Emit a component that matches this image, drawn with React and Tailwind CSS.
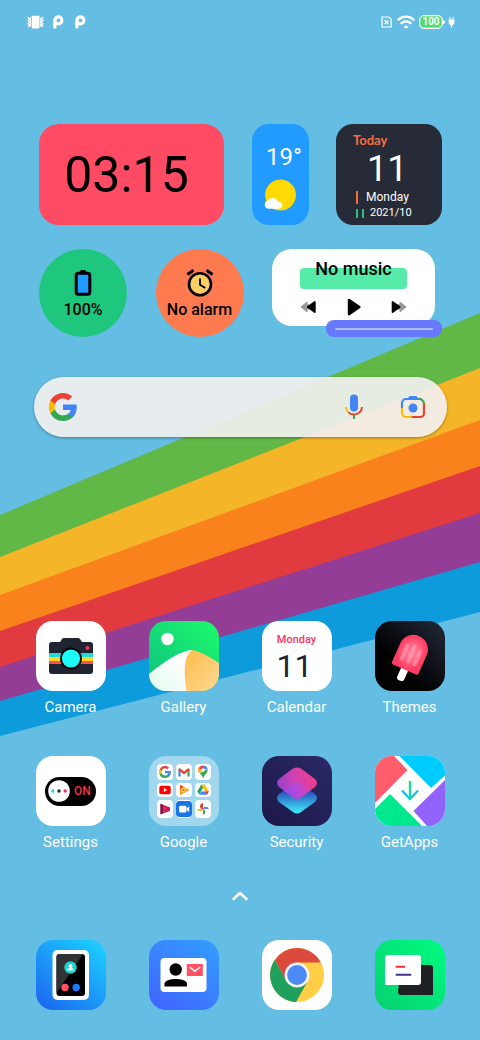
import React from "react";

function Wallpaper() {
  return (
    <svg className="absolute inset-0 h-full w-full" viewBox="0 0 480 1040" preserveAspectRatio="none" aria-hidden="true">
      <rect width="480" height="1040" fill="#64bde2" />
      <path d="M0 515 480 313V380L0 570Z" fill="#62b846" />
      <path d="M0 557 480 368V430L0 605Z" fill="#f4b528" />
      <path d="M0 595 480 420V476L0 640Z" fill="#f9821c" />
      <path d="M0 631 480 466V524L0 677Z" fill="#e13b3f" />
      <path d="M0 667 480 513V572L0 711Z" fill="#933d97" />
      <path d="M0 701 480 562V612L0 736Z" fill="#0d9bdc" />
    </svg>
  );
}

function BubbleMark() {
  return (
    <svg className="h-[14px] w-3" viewBox="0 0 12 14" aria-hidden="true">
      <circle cx="6.4" cy="5.4" r="3.5" fill="none" stroke="#fff" strokeWidth="3.2" />
      <rect x="1.2" y="5" width="3.3" height="8.6" rx="1" fill="#fff" />
    </svg>
  );
}

function StatusBar() {
  return (
    <header className="flex h-11 items-center justify-between pl-[27px] pr-[25px]">
      <div className="flex items-center">
        <svg className="mr-2 h-[14px] w-[17px]" viewBox="0 0 17 14" aria-hidden="true">
          <rect x="4.7" y="0.8" width="7.8" height="12.8" rx="1" fill="#fff" />
          <path d="M.6 2l2 1.6-1.6 1.7 1.6 1.7L1 8.700l1.600 1.700-1.600 1.600M3.400 2.500v9M16.400 2l-2 1.600L16 5.300 14.400 7 16 8.700l-1.600 1.700L16 12M13.800 2.500v9" fill="none" stroke="#fff" strokeWidth="1.200" />
        </svg>
        <BubbleMark />
        <span className="w-[10px]" />
        <BubbleMark />
      </div>
      <div className="flex items-center">
        <svg className="mr-[5px] h-3 w-[11px]" viewBox="0 0 11 12" aria-hidden="true">
          <path d="M1 1h6.800L10.200 3.200V11H1Z" fill="none" stroke="#fff" strokeWidth="1.200" />
          <path d="m3.600 4.300 3.800 3.800M7.400 4.300 3.600 8.100" stroke="#fff" strokeWidth="1.300" />
        </svg>
        <svg className="mr-1 h-[14px] w-[18px]" viewBox="0 0 18 14" fill="none" stroke="#fff" strokeWidth="2.400" strokeLinecap="round" aria-hidden="true">
          <path d="M1.500 4.600C5.800.6 12.200.6 16.500 4.600M4.500 8.200c2.600-2.300 6.400-2.300 9 0" />
          <ellipse cx="9" cy="11.900" rx="1.700" ry="1" fill="#fff" strokeWidth="1" />
        </svg>
        <div className="flex items-center">
          <span className="flex h-[14px] w-6 items-center justify-center rounded-[5px] border border-white bg-[#4fdc72] font-['Roboto',sans-serif] text-[10px] leading-none font-bold text-white ring-1 ring-white/30 ring-inset">100</span>
          <span className="h-1 w-[2px] rounded-r bg-white" />
        </div>
        <svg className="ml-[3px] h-[13px] w-[7px]" viewBox="0 0 7 13" aria-hidden="true">
          <path d="M1.400.8h1v2.600h2.200V.8h1v2.600H6.400V6.200C6.400 8 5.200 9 4.100 9.200V12H2.900V9.200C1.800 9 .6 8 .6 6.200V3.400h.8Z" fill="#fff" />
        </svg>
      </div>
    </header>
  );
}

function WeatherCard() {
  return (
    <section className="flex h-[101px] w-[57px] flex-col items-center rounded-[17px] bg-[#219bff] pt-[19px]" aria-label="Weather">
      <p className="pl-2 text-2xl leading-7 text-white">19°</p>
      <svg className="mt-2 h-8 w-8" viewBox="0 0 32 32" aria-hidden="true">
        <circle cx="16.500" cy="16" r="15.400" fill="#ffd900" />
        <path d="M4.500 29.700a4.200 4.200 0 0 1-.4-8.300 5.400 5.400 0 0 1 9.800 1.500 3.500 3.500 0 1 1 .1 6.800Z" fill="#fff" />
      </svg>
    </section>
  );
}

function DateCard() {
  return (
    <section className="h-[101px] w-[106px] rounded-[17px] bg-[#262b37] px-[17px] pt-2 text-white" aria-label="Date">
      <p className="font-['Lato',sans-serif] text-[13px] leading-4 font-bold text-[#fb6b42]">Today</p>
      <p className="pl-[14px] text-4xl leading-[42px]">11</p>
      <p className="flex h-[14px] items-center pl-[3px] text-xs">
        <span className="mr-2 h-[13px] w-[2px] bg-[#fb6b42]" />
        Monday
      </p>
      <p className="mt-[2px] flex h-[15px] items-center pl-[3px] text-[11px]">
        <span className="mr-1 h-[9px] w-[2px] bg-[#20c77d]" />
        <span className="mr-[6px] h-[9px] w-[2px] bg-[#20c77d]" />
        2021/10
      </p>
    </section>
  );
}

function MusicCard() {
  return (
    <section className="relative h-22 w-[170px]" aria-label="Music">
      <div className="mr-[7px] h-[77px] rounded-[20px] bg-white pt-2">
        <div className="relative text-center">
          <span className="absolute inset-x-7 top-[11px] h-[21px] rounded-[4px] bg-[#56eba9]" />
          <p className="relative text-lg leading-6 font-medium">No music</p>
        </div>
        <div className="mt-[17px] flex items-center justify-between px-7">
          <button type="button" aria-label="Previous track">
            <svg className="h-[18px] w-4" viewBox="0 0 16 18">
              <path d="M1 9 7 4v2.800h2v4.400H7V14Z" fill="#999" stroke="#999" strokeWidth="1" strokeLinejoin="round" />
              <path d="M14.800 4v10L7.800 9Z" fill="#000" stroke="#000" strokeWidth="1.800" strokeLinejoin="round" />
            </svg>
          </button>
          <button type="button" aria-label="Play">
            <svg className="h-[18px] w-4" viewBox="0 0 16 18">
              <path d="M3 2v14.200L13.400 9Z" fill="#000" stroke="#000" strokeWidth="2.400" strokeLinejoin="round" />
            </svg>
          </button>
          <button type="button" aria-label="Next track">
            <svg className="h-[18px] w-4" viewBox="0 0 16 18">
              <path d="M15 9 9 4v2.800H7v4.400h2V14Z" fill="#999" stroke="#999" strokeWidth="1" strokeLinejoin="round" />
              <path d="M1.600 4v10l7-5Z" fill="#000" stroke="#000" strokeWidth="1.800" strokeLinejoin="round" />
            </svg>
          </button>
        </div>
      </div>
      <div className="absolute right-0 bottom-0 flex h-[17px] w-[116px] items-center rounded-lg bg-[#6779fc] px-[9px]">
        <span className="h-[2px] w-full rounded bg-[#b1bcff]" />
      </div>
    </section>
  );
}

function Widgets() {
  return (
    <div className="mt-20 mr-[38px] ml-[39px] flex flex-col gap-6">
      <div className="flex justify-between">
        <section className="flex h-[101px] w-[185px] items-center justify-center rounded-[20px] bg-[#ff4c64] pr-[10px]" aria-label="Clock">
          <time className="text-[50px] leading-none">03:15</time>
        </section>
        <WeatherCard />
        <DateCard />
      </div>
      <div className="flex justify-between">
        <section className="flex size-22 flex-col items-center rounded-full bg-[#1fc77e] pt-5" aria-label="Battery">
          <svg className="h-7 w-[18px]" viewBox="0 0 18 28" aria-hidden="true">
            <rect x="6" y="1" width="6" height="4" rx="1.500" />
            <rect x="2.200" y="4.200" width="13.600" height="21" rx="2" fill="#219bff" stroke="#000" strokeWidth="3" />
          </svg>
          <p className="mt-[3px] text-base leading-5 font-medium">100%</p>
        </section>
        <section className="flex size-22 flex-col items-center rounded-full bg-[#ff7b4f] pt-5" aria-label="Alarm">
          <svg className="h-7 w-7" viewBox="0 0 28 28" fill="none" stroke="#000" strokeWidth="2.600" aria-hidden="true">
            <circle cx="14" cy="15.200" r="11" fill="#fdcd66" />
            <path d="M14 9.500v6.200l5.300 3.400" strokeWidth="1.800" />
            <path d="M1.400 5.400 7.500 1.200M20.500 1.200l6.100 4.200" strokeWidth="3" />
          </svg>
          <p className="mt-[3px] text-base leading-5 font-medium whitespace-nowrap">No alarm</p>
        </section>
        <MusicCard />
      </div>
    </div>
  );
}

function GoogleG({ className }) {
  return (
    <svg className={className} viewBox="0 0 24 24" aria-hidden="true">
      <path fill="#4285f4" d="M23.500 9.800H12v4.700h6.600a5.700 5.700 0 0 1-2.500 3.700v3.100h4c2.400-2.200 3.700-5.400 3.700-9.200 0-.8-.1-1.600-.3-2.300Z" />
      <path fill="#34a853" d="M12 24c3.300 0 6-1.100 8.100-2.900l-4-3.100c-1.100.8-2.500 1.200-4.100 1.200-3.200 0-5.800-2.100-6.800-5H1.200v3.200A12 12 0 0 0 12 24Z" />
      <path fill="#fbbc05" d="M5.200 14.200a7 7 0 0 1 0-4.500V6.500h-4a12 12 0 0 0 0 10.900Z" />
      <path fill="#ea4335" d="M12 4.700c1.800 0 3.400.6 4.600 1.800L20 3.100A12 12 0 0 0 1.200 6.500l4 3.200c1-2.900 3.600-5 6.800-5Z" />
    </svg>
  );
}

function SearchBar() {
  return (
    <form role="search" className="mt-10 mr-[33px] ml-[34px] flex h-[60px] items-center rounded-full bg-[#f2f0f0]/92 pr-5 pl-[15px] shadow-[0_1px_3px_rgba(0,0,0,0.35)]">
      <GoogleG className="h-7 w-7 shrink-0" />
      <input type="search" aria-label="Search" className="mx-3 min-w-0 flex-1 bg-transparent text-base outline-none" />
      <button type="button" aria-label="Voice search" className="mr-[35px]">
        <svg className="h-7 w-5" viewBox="0 0 20 28" fill="none" strokeWidth="2">
          <rect x="6" y="1.500" width="8" height="17" rx="4" fill="#4285f4" />
          <path d="M2 14A8 8 0 0 0 4.600 19.400" stroke="#fbbc05" />
          <path d="M4.600 19.400A8 8 0 0 0 18 14" stroke="#ea4335" />
          <path d="M10 21.800V26" stroke="#34a853" />
        </svg>
      </button>
      <button type="button" aria-label="Search with camera">
        <svg className="h-7 w-7" viewBox="0 0 28 28" fill="none" strokeWidth="2.200">
          <path d="M8.500 6 10.500 3h7l2 3Z" fill="#4285f4" />
          <path d="M3 15V10A4 4 0 0 1 7 6H20" stroke="#4285f4" />
          <path d="M19.500 6A5 5 0 0 1 25 11.500" stroke="#34a853" />
          <path d="M25 11V20.500A3.500 3.500 0 0 1 21.500 24H12.500" stroke="#ea4335" />
          <path d="M3 15v5A4 4 0 0 0 7 24H12.500" stroke="#fbbc05" />
          <circle cx="14" cy="15" r="4.500" fill="#4285f4" />
        </svg>
      </button>
    </form>
  );
}

function Art({ children }) {
  return (
    <svg className="h-full w-full" viewBox="0 0 70 70" aria-hidden="true">
      {children}
    </svg>
  );
}

const camera = (
  <Art>
    <rect width="70" height="70" fill="#fff" />
    <path d="M16 21h8l2-3q.7-1 2-1h14q1.300 0 2 1l2 3h8a3 3 0 0 1 3 3v26a3 3 0 0 1-3 3H16a3 3 0 0 1-3-3V24a3 3 0 0 1 3-3Z" fill="#1f2530" />
    <rect x="13" y="32" width="44" height="4" fill="#24d9d6" />
    <rect x="13" y="36" width="44" height="4" fill="#ffd51f" />
    <rect x="13" y="40" width="44" height="3" fill="#ff4c56" />
    <circle cx="35" cy="37.500" r="10" fill="#1cfbf8" stroke="#000" strokeWidth="1.800" />
    <circle cx="51.500" cy="27" r="2" fill="#ff3555" />
  </Art>
);

const gallery = (
  <Art>
    <defs>
      <linearGradient id="galSky" x1="1" y1="0" x2="0" y2="1"><stop stopColor="#1dfb6b" /><stop offset="1" stopColor="#0fbe80" /></linearGradient>
      <linearGradient id="galHill" x1="1" y1="0" x2="0" y2="1"><stop offset=".3" stopColor="#fff" /><stop offset="1" stopColor="#e3fbf0" /></linearGradient>
      <linearGradient id="galSand" x1="0" y1="0" x2="1" y2="1"><stop stopColor="#ffbd45" /><stop offset="1" stopColor="#fbd896" /></linearGradient>
    </defs>
    <rect width="70" height="70" fill="url(#galSky)" />
    <circle cx="18.500" cy="18" r="6.200" fill="#fff" />
    <path d="M0 53Q28 30 43 29Q48 29 50 70H0Z" fill="url(#galHill)" />
    <path d="M43 29Q52 30 70 42V70H37.500Q32 38 43 29Z" fill="url(#galSand)" />
  </Art>
);

const calendar = (
  <div className="flex h-full flex-col items-center bg-white pt-[11px]">
    <span className="text-[11px] leading-4 font-medium text-[#f9345a]">Monday</span>
    <span className="pr-1 text-[32px] leading-9 text-[#20242e]">11</span>
  </div>
);

const themes = (
  <Art>
    <defs>
      <linearGradient id="themeBg" x1="1" y1="0" x2="0" y2="1"><stop stopColor="#222b3a" /><stop offset=".65" stopColor="#020203" /></linearGradient>
      <radialGradient id="pop"><stop stopColor="#ff8aa2" /><stop offset="1" stopColor="#ff3c62" /></radialGradient>
    </defs>
    <rect width="70" height="70" fill="url(#themeBg)" />
    <g transform="translate(29.500 48.500) rotate(24)">
      <rect x="-3.800" y="-2" width="7.600" height="14" rx="3" fill="#fff" />
      <path d="M-14.500-22a14.500 14.500 0 0 1 29 0V-2a2 2 0 0 1-2 2h-25a2 2 0 0 1-2-2Z" fill="url(#pop)" />
      <path d="M-7-23V-9M0-25V-9M7-23V-9" stroke="#ff9db1" strokeWidth="4" strokeLinecap="round" opacity=".6" />
    </g>
  </Art>
);

const settings = (
  <div className="flex h-full items-center justify-center bg-white">
    <span className="flex h-[29px] w-[51px] items-center rounded-full bg-black pl-[3px]">
      <svg className="size-[22px]" viewBox="0 0 22 22" aria-hidden="true">
        <circle cx="11" cy="11" r="10.800" fill="#fff" />
        <circle cx="4.800" cy="11" r="1.700" fill="#21d7dc" />
        <circle cx="11" cy="11" r="1.700" fill="#20242e" />
        <circle cx="17.200" cy="11" r="1.700" fill="#f5287b" />
      </svg>
      <span className="ml-1 text-xs leading-none font-medium text-[#f0323c]">ON</span>
    </span>
  </div>
);

const miniApps = [
  <GoogleG key="g" className="h-3 w-3" />,
  <svg key="mail" className="h-3 w-3" viewBox="0 0 12 12">
    <path d="M1.500 10.500V3.500" stroke="#4285f4" strokeWidth="2.200" />
    <path d="M10.500 10.500V3.500" stroke="#34a853" strokeWidth="2.200" />
    <path d="M1 3 6 7l5-4" fill="none" stroke="#ea4335" strokeWidth="2.300" />
  </svg>,
  <svg key="maps" className="h-[14px] w-3" viewBox="0 0 12 14">
    <path d="M6 .5A4.800 4.800 0 0 0 1.500 7L6 4.500Z" fill="#ea4335" />
    <path d="M6 .5a4.700 4.700 0 0 1 4.500 3.200L6 5Z" fill="#4285f4" />
    <path d="M10.500 3.700C11.500 8 7 9.500 6.200 13.500 5.500 11 4 9.800 2.800 8.500Z" fill="#34a853" />
    <path d="M1.500 3.200C.8 5.500 1.500 7 2.800 8.500L6 5Z" fill="#fbbc05" />
    <circle cx="6" cy="5" r="1.800" fill="#fff" />
  </svg>,
  <svg key="video" className="h-3 w-3" viewBox="0 0 12 12">
    <rect x=".3" y="1.800" width="11.400" height="8.400" rx="2" fill="#f00" />
    <path d="M4.800 4v4L8.200 6Z" fill="#fff" />
  </svg>,
  <svg key="play" className="h-3 w-3" viewBox="0 0 12 12">
    <path d="M2 .8v10.400L11.500 6Z" fill="#fb9b22" />
    <path d="M2 .8v5L6 3Z" fill="#f4511e" />
    <circle cx="5.600" cy="6" r="2.400" fill="#ffd54a" />
    <circle cx="5.600" cy="6" r="1" fill="#f4511e" />
  </svg>,
  <svg key="drive" className="h-3 w-3" viewBox="0 0 12 12">
    <path d="M4.200.8H7.800L3.800 7.500 2.200 10.500.2 7.500Z" fill="#1fa463" />
    <path d="M4.200.8H7.800L11.800 7.500H8.200Z" fill="#ffc107" />
    <path d="M2.200 10.800 4 7.500h7.800L9.900 10.800Z" fill="#4285f4" />
    <path d="M9.900 10.800 8.200 7.500h3.600Z" fill="#ea4335" />
  </svg>,
  <svg key="movies" className="h-3 w-3" viewBox="0 0 12 12">
    <path d="M1.500.8 11 4.500V8L1.500 11.200Z" fill="#c2185b" />
    <path d="M1.500.8 4 1.800V10.400L1.500 11.200Z" fill="#7b1148" />
    <path d="M4 1.800 8 6 4 10.400Z" fill="#e52c50" />
  </svg>,
  <svg key="meet" className="h-4 w-4" viewBox="0 0 16 16">
    <rect width="16" height="16" rx="3.500" fill="#1a73e8" />
    <rect x="3" y="4.700" width="7.500" height="6.800" rx="1.500" fill="#fff" />
    <path d="m10.500 7.500 2.700-2.200v5.600l-2.700-2.200Z" fill="#fff" />
  </svg>,
  <svg key="photos" className="h-3 w-3" viewBox="0 0 12 12">
    <path d="M6 6V.4A2.900 2.900 0 0 0 6 6Z" fill="#ea4335" />
    <path d="M6 6V.2A3 3 0 0 0 6 6.200Z" fill="#ea4335" />
    <path d="M6 6h5.800A3 3 0 0 0 6 6Z" fill="#4285f4" />
    <path d="M6 6v5.800A3 3 0 0 0 6 6Z" fill="#34a853" />
    <path d="M6 6H.2A3 3 0 0 0 6 6Z" fill="#fbbc05" />
  </svg>,
];

const google = (
  <div className="grid h-full grid-cols-3 gap-[3px] bg-white/40 p-2">
    {miniApps.map((icon) => (
      <span key={icon.key} className="flex items-center justify-center rounded-[4px] bg-white">{icon}</span>
    ))}
  </div>
);

const security = (
  <Art>
    <defs>
      <linearGradient id="secBg" x1="1" y1="0" x2="0" y2="1"><stop stopColor="#2b2a68" /><stop offset="1" stopColor="#1b1747" /></linearGradient>
      <linearGradient id="secPink" x1="1" y1="0.300" x2="0" y2="0.700"><stop stopColor="#f13f86" /><stop offset=".5" stopColor="#cf42b4" /><stop offset="1" stopColor="#8e42d0" /></linearGradient>
      <linearGradient id="secBlue" x1="0" y1="0" x2="0" y2="1"><stop offset=".3" stopColor="#2a55bd" /><stop offset="1" stopColor="#41f0ff" /></linearGradient>
      <linearGradient id="secMix" x1="0" y1="0" x2="1" y2="0"><stop stopColor="#8152f5" stopOpacity=".8" /><stop offset=".6" stopColor="#b04cf0" stopOpacity=".5" /><stop offset="1" stopColor="#d845b0" stopOpacity="0" /></linearGradient>
      <clipPath id="secTop"><path d="M31 12.500q4-2 8 0L53 23q4 4 0 8L39 41.500q-4 3-8 0L17 31q-4-4 0-8Z" /></clipPath>
    </defs>
    <rect width="70" height="70" fill="url(#secBg)" />
    <path d="M31 28q4-2 8 0L53 38q4 4 0 8L39 56q-4 3-8 0L17 46q-4-4 0-8Z" fill="url(#secBlue)" />
    <path d="M31 12.500q4-2 8 0L53 23q4 4 0 8L39 41.500q-4 3-8 0L17 31q-4-4 0-8Z" fill="url(#secPink)" />
    <path clipPath="url(#secTop)" d="M31 28q4-2 8 0L53 38q4 4 0 8L39 56q-4 3-8 0L17 46q-4-4 0-8Z" fill="url(#secMix)" />
  </Art>
);

const getApps = (
  <Art>
    <rect width="70" height="70" fill="#fff" />
    <path d="M0 0H19L32.500 14 0 47Z" fill="#ff5c6c" />
    <path d="M24.500 0H70V19.500L56 32Z" fill="#00ccff" />
    <path d="M70 24V70H52L38.500 55Z" fill="#9163fb" />
    <path d="M0 53 15 38 47 70H0Z" fill="#00e88e" />
    <path d="m27 34.500 8 8.500 8-8.500" fill="none" stroke="#13bdf2" strokeWidth="2.300" />
    <path d="M35 25v18" stroke="#14dd91" strokeWidth="2.300" />
  </Art>
);

const phone = (
  <Art>
    <defs>
      <linearGradient id="phoneBg" x1="1" y1="0" x2="0.200" y2="1"><stop offset=".1" stopColor="#1bcbff" /><stop offset="1" stopColor="#1c6cf0" /></linearGradient>
    </defs>
    <rect width="70" height="70" fill="url(#phoneBg)" />
    <rect x="16.500" y="10" width="36.500" height="50" rx="5" fill="#fff" />
    <rect x="20.500" y="14" width="28.500" height="42" rx="3" fill="#000" />
    <path d="M23.500 14H47L20.500 53V17a3 3 0 0 1 3-3Z" fill="#303236" />
    <circle cx="34.500" cy="27.500" r="6.200" fill="#16d7ce" />
    <path d="M34.500 24a2 2 0 0 1 1 3.700v.8h2V30.600h-6v-2.100h2v-.8a2 2 0 0 1 1-3.700Z" fill="#fff" />
    <circle cx="29" cy="47.500" r="3.700" fill="#ff5064" />
    <circle cx="40.200" cy="47.500" r="3.700" fill="#1b7cfb" />
  </Art>
);

const contacts = (
  <Art>
    <defs>
      <linearGradient id="contactBg" x1="1" y1="0" x2="0.300" y2="1"><stop stopColor="#32a0ff" /><stop offset="1" stopColor="#4069ff" /></linearGradient>
    </defs>
    <rect width="70" height="70" fill="url(#contactBg)" />
    <rect x="11.500" y="18" width="46" height="34" rx="4" fill="#fff" />
    <circle cx="26.700" cy="29.500" r="6.200" />
    <path d="M15.500 46.500V43C18 37.500 35.500 37.500 38 43v3.500Z" />
    <rect x="37.800" y="24" width="16" height="12" fill="#ff5064" />
    <path d="m40.500 27 5.300 4.200 5.400-4.200" fill="none" stroke="#fff" strokeWidth="1.500" />
  </Art>
);

const chrome = (
  <Art>
    <rect width="70" height="70" fill="#fff" />
    <circle cx="35" cy="35" r="27" fill="#ffce44" />
    <path d="M35 8A27 27 0 0 1 58.800 22.500H35L24.200 41.200 13 20A27 27 0 0 1 35 8Z" fill="#dc4a3d" />
    <path d="M12.800 19.800A27 27 0 0 0 34 62L45.500 41.500H24.500Z" fill="#1fa15d" />
    <circle cx="35" cy="35" r="12.400" fill="#f4f4f4" />
    <circle cx="35" cy="35" r="9.900" fill="#4c8bf5" />
  </Art>
);

const messages = (
  <Art>
    <defs>
      <linearGradient id="msgBg" x1="1" y1="0" x2="0" y2="1"><stop stopColor="#00fb80" /><stop offset="1" stopColor="#06d070" /></linearGradient>
    </defs>
    <rect width="70" height="70" fill="url(#msgBg)" />
    <path d="M26 25H55a3 3 0 0 1 3 3V55H26a3 3 0 0 1-3-3Z" fill="#1f2124" />
    <path d="M13 15H43a3 3 0 0 1 3 3V42a3 3 0 0 1-3 3H10V18a3 3 0 0 1 3-3Z" fill="#fff" />
    <path d="M20.700 26.700H30" stroke="#f52b3f" strokeWidth="2" />
    <path d="M20.700 34.700H36.200" stroke="#43308a" strokeWidth="2" />
  </Art>
);

const apps = [
  { name: "Camera", art: camera },
  { name: "Gallery", art: gallery },
  { name: "Calendar", art: calendar },
  { name: "Themes", art: themes },
  { name: "Settings", art: settings },
  { name: "Google", art: google },
  { name: "Security", art: security },
  { name: "GetApps", art: getApps },
];

const dock = [
  { name: "Phone", art: phone },
  { name: "Contacts", art: contacts },
  { name: "Chrome", art: chrome },
  { name: "Messages", art: messages },
];

function AppButton({ name, art, showName }) {
  return (
    <button type="button" aria-label={name} className="flex flex-col items-center">
      <span className="block size-[70px] overflow-hidden rounded-[17px]">{art}</span>
      {showName && <span className="mt-[6px] text-[15px] leading-5 text-white">{name}</span>}
    </button>
  );
}

export default function App() {
  return (
    <div className="relative min-h-screen overflow-hidden font-['Roboto',sans-serif] text-black">
      <Wallpaper />
      <div className="relative flex min-h-screen flex-col">
        <StatusBar />
        <Widgets />
        <SearchBar />
        <main className="mt-[184px] grid grid-cols-4 gap-y-[39px] px-[14px]">
          {apps.map((app) => (
            <AppButton key={app.name} name={app.name} art={app.art} showName />
          ))}
        </main>
        <button type="button" aria-label="Open app drawer" className="mx-auto mt-[34px]">
          <svg className="h-5 w-5" viewBox="0 0 20 20" fill="none" stroke="#fff" strokeWidth="2.600" strokeLinecap="round" strokeLinejoin="round">
            <path d="m3.500 13 6.500-6 6.500 6" />
          </svg>
        </button>
        <nav aria-label="Dock" className="mt-[34px] grid grid-cols-4 px-[14px] pb-7">
          {dock.map((app) => (
            <AppButton key={app.name} name={app.name} art={app.art} />
          ))}
        </nav>
      </div>
    </div>
  );
}
